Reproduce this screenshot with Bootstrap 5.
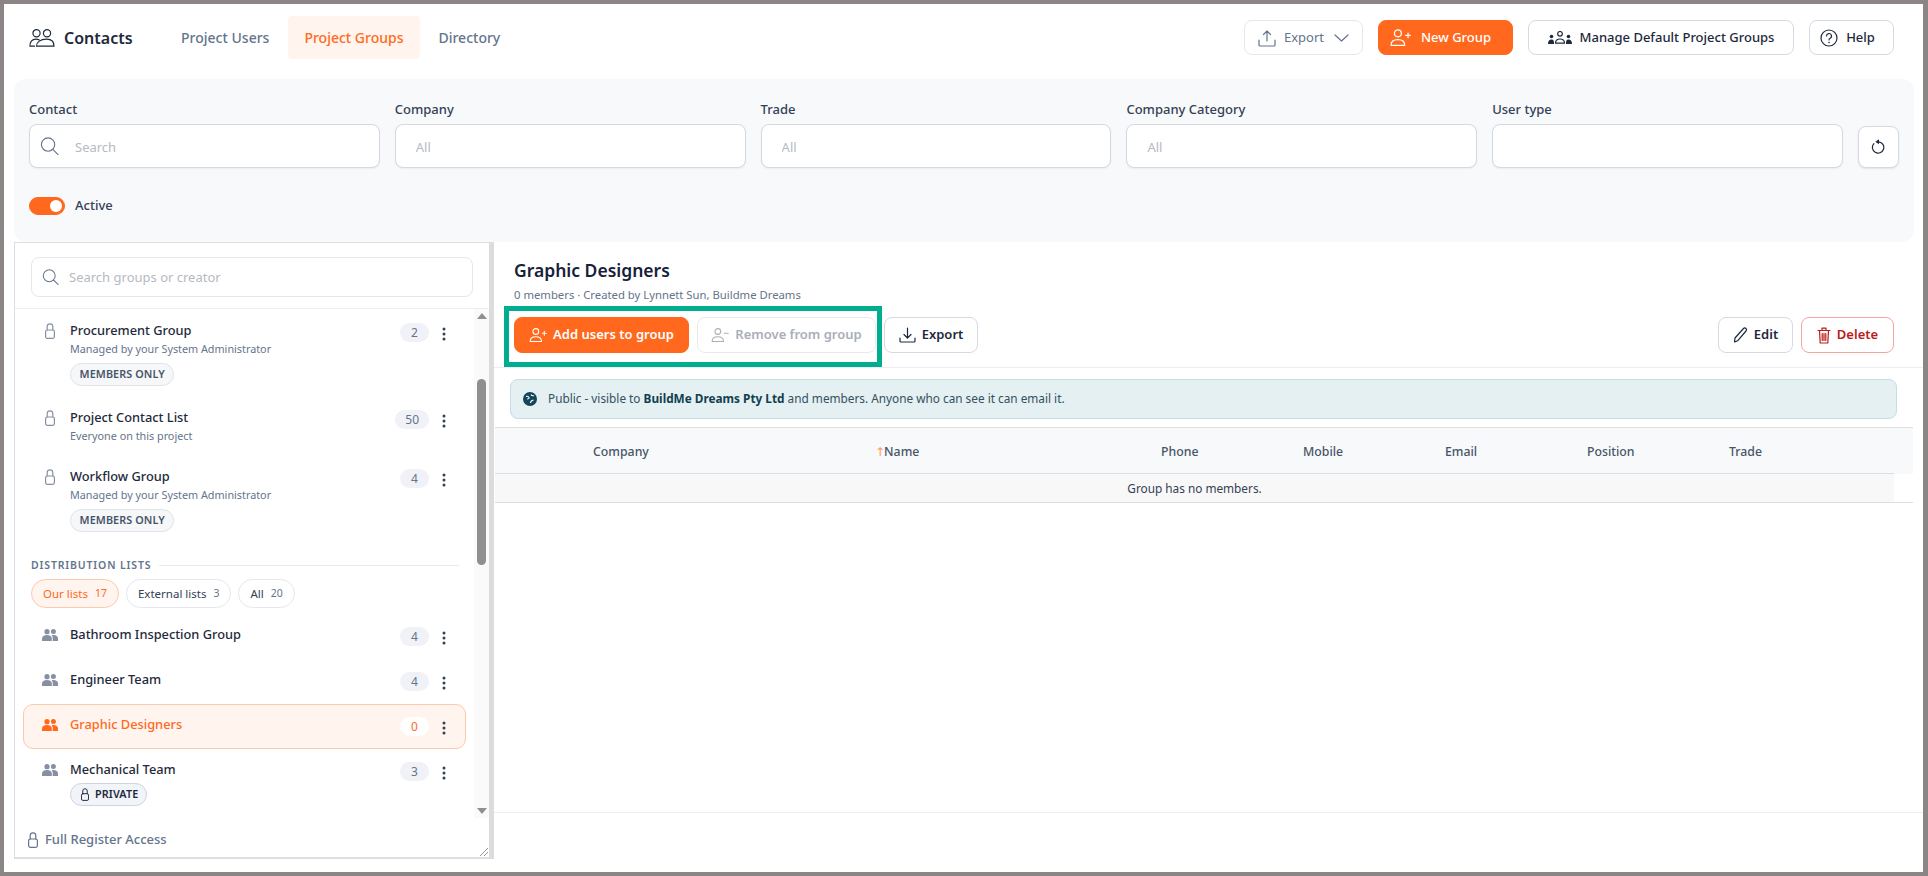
<!DOCTYPE html>
<html lang="en">
<head>
<meta charset="utf-8">
<title>Contacts</title>
<link href="https://cdn.jsdelivr.net/npm/bootstrap@5.3.0/dist/css/bootstrap.min.css" rel="stylesheet">
<style>
html,body{height:100%;overflow:hidden}
body{font-family:"Noto Sans","Open Sans",sans-serif;font-size:13px;color:#1e293b;background:#fff}
svg{display:block;flex:none}
.defsholder{position:absolute}
.frame{height:876px;border:solid #8c8585;border-width:4px 5px 4px 4px;position:relative;display:flex;flex-direction:column;background:#fff}
.ic{fill:none;stroke:currentColor;stroke-width:1.2;stroke-linecap:round;stroke-linejoin:round}
.topbar{height:75px;padding:12px 29px 0 25px;flex:none}
.brand{height:53px;font-size:16px;font-weight:600;color:#1e293b;gap:9px;margin-right:32px;margin-top:-5px}
.tabx{height:43px;display:flex;align-items:center;padding:0 16.500px;font-size:14px;font-weight:500;color:#64748b;border-radius:4px;text-decoration:none;margin-right:2px}
.tabx.on{background:#fff4ee;color:#ff6a1c}
.topacts{gap:15px;margin-top:4px}
.btnx{display:inline-flex;align-items:center;justify-content:center;gap:8px;height:35px;padding:0 12px;font-size:13px;font-weight:500;color:#1e293b;background:#fff;border:1px solid #d5d9e3;border-radius:8px;white-space:nowrap}
.btnx.prim{background:#ff681d;border-color:#ff681d;color:#fff}
.btnx.lite{border-color:#e4e7ec;color:#64748b;font-weight:400}
.btnx.dis{border-color:#e8eaf0;color:#a9aeb8;font-weight:600}
.btnx.bad{border-color:#f5a5a0;color:#b91c1c}
.btnx.act{height:36px;font-weight:600;gap:6px}
.w-exp{width:119px}.w-new{width:135px;gap:10px;padding:0 22px 0 12px}.w-mng{width:266px;gap:8px}.w-hlp{width:85px;padding:0 19px 0 11px}
.w-add{width:175px}.w-rem{width:179px}.w-xp2{width:94px}.w-edt{width:75px}.w-del{width:93px}
.chev{margin-left:2px}
.filters{margin:0 9px 0 10px;height:163px;background:#f8f9fb;border-radius:12px;padding:22px 15px 0;flex:none}
.frow{gap:15px}
.fld{flex:1 1 0;min-width:0}
.fld label{display:block;font-size:13px;font-weight:500;color:#334155;line-height:16px;margin-bottom:7px}
.fld .form-control{height:44px;font-size:13px;border:1px solid #d5d9e3;border-radius:8px;padding:8px 12px 6px 20px;box-shadow:0 1px 2px rgba(30,41,59,.06)}
.form-control::placeholder{color:#b6bac2}
.fld .form-control.withicon{padding-left:45px}
.inico{position:absolute;top:50%;transform:translateY(-50%);color:#64748b}
.ico-c{left:11px}
.ico-l{left:27px;top:34px}
.resetb{width:41px;height:42px;padding:0;margin-top:25px;box-shadow:0 1px 2px rgba(30,41,59,.1)}
.swt{margin:28px 0 0;padding:0;min-height:18px;gap:10px;font-size:13px;font-weight:500;color:#334155}
.swt .form-check-input{width:36px;height:18px;margin:0;background-color:#ff681d;border-color:#ff681d;box-shadow:none}
.mainrow{flex:1 1 0;min-height:0;display:flex;margin-left:10px}
.leftp{width:475px;flex:none;height:617px;border:solid #dcdee2;border-width:1px 0 2px 1px;display:flex;flex-direction:column;position:relative;background:#fff}
.splitbar{width:5px;background:#dcdcdc;height:617px;flex:none}
.lsearch{height:66px;padding:14px 16px 0 16px;border-bottom:1px solid #eceef2;flex:none}
.lsearch .form-control{height:40px;font-size:13px;border:1px solid #e4e7ec;border-radius:8px;padding-left:37px}
.lbody{height:509px;display:flex;flex:none;overflow:hidden}
.lscroll{flex:1 1 0;min-width:0;padding:1px 8px 0;overflow:hidden}
.track{width:15px;background:#fafafa;flex:none;display:flex;flex-direction:column;align-items:center;padding-top:4px;position:relative}
.thumb{width:9px;height:186px;background:#8f8f8f;border-radius:5px;margin-top:60px}
.tri{width:0;height:0;border-left:5px solid transparent;border-right:5px solid transparent}
.tri.u{border-bottom:6px solid #8f8f8f}
.tri.d{border-top:6px solid #8f8f8f;margin-top:auto;margin-bottom:4px}
.item{display:flex;align-items:flex-start;padding:10px 19px 11px 18px;border:1px solid transparent;border-radius:10px;min-height:45px}
.item.tall{padding-bottom:10px}
.item.sel{background:#fff4ee;border-color:#fdc9ac}
.item .leadi{width:16px;margin-right:12px;color:#8790a3;display:flex;justify-content:center;margin-top:2px}
.item .leadi.grp{margin-top:4px}
.item.sel .leadi,.item.sel .ttl{color:#ff681d}
.ibody{flex:1 1 0;min-width:0}
.ttl{font-size:12.800px;font-weight:500;line-height:18px;color:#1e293b}
.subl{font-size:10.800px;line-height:16px;color:#64748b;margin-top:2px}
.tagx{display:flex;width:fit-content;align-items:center;gap:5px;height:23px;padding:0 8.500px;border:1px solid #dfe3ea;border-radius:12px;background:#f6f7f9;font-size:10.800px;font-weight:600;color:#475569;margin-top:6px;letter-spacing:.1px}
.tagx.dark{background:#f1f4f9;border-color:#cdd4e0;color:#1e293b;margin-top:5px;padding:0 8px 0 10px;gap:6px}
.cnt{min-width:29px;height:19px;padding:0 10px;border-radius:10px;background:#f0f2f7;color:#64748b;font-size:12px;line-height:19px;text-align:center;margin-top:2px}
.item.sel .cnt{background:#fff;color:#ff681d}
.dots{margin:6px 0 0 13px;color:#334155}
.sechead{padding:14px 7px 0 8px;gap:8px;font-size:10.500px;font-weight:600;letter-spacing:.85px;line-height:16px;color:#64748b}
.sechead i{flex:1;height:1px;background:#e8ebef}
.pillrow{gap:7px;margin:6px 0 6px 8px}
.chip{height:29px;display:inline-flex;align-items:center;gap:7px;padding:0 11px;border:1px solid #e4e7ec;border-radius:15px;font-size:11.500px;color:#334155;background:#fff}
.chip em{font-style:normal;font-size:10.500px;color:#64748b}
.chip.on{background:#fff4ee;border-color:#fdc9ac;color:#ff681d}
.chip.on em{color:#ff681d}
.lfoot{padding:12px 0 0 13px;gap:7px;font-size:13px;font-weight:500;color:#64748b}
.grip{position:absolute;right:1px;bottom:1px;color:#777}
.rightp{flex:1 1 0;min-width:0;display:flex;flex-direction:column}
.rhead{height:126px;padding:16px 29px 0 20px;border-bottom:1px solid #eceef2;position:relative;flex:none}
.rhead h1{font-size:17.500px;font-weight:600;line-height:24px;color:#16213a;margin:0}
.rsub{font-size:11.300px;line-height:16px;color:#64748b;margin:5px 0 14px}
.acts{gap:8px}
.notehi{position:absolute;left:10px;top:64px;width:378px;height:61px;border:5px solid #00ad8e;pointer-events:none}
.infox{margin:11px 26px 0 16px;height:40px;display:flex;align-items:center;gap:11px;padding:0 12px;background:#e4f0f2;border:1px solid #c5dde4;border-radius:8px;font-size:11.800px;color:#33515e}
.infox b{color:#12404f;font-weight:700}
.tblwrap{margin:8px 10px 0 1px;flex:none}
.gridt{width:1418px;table-layout:fixed;border-collapse:collapse;margin:0;font-size:12.300px}
.gridt .c0{width:90px}.gridt .c1{width:284px}.gridt .c2{width:142px}.gridt .c3{width:173px}.gridt .c4{width:19px}
.gridt th{height:46px;background:#f8f9fb;font-weight:500;color:#475569;padding:3px 8px 0;border-top:1px solid #dcdee2;border-bottom:1px solid #dcdee2;vertical-align:middle}
.gridt td{height:29px;padding:1px 0 0;background:#f8f8f8;text-align:center;font-size:11.800px;color:#334155;border-bottom:1px solid #dcdee2;vertical-align:middle}
.gridt td.blank{background:#fff}
.gridt th.blank{border-bottom:none}
.arrowup{color:#ff9a5c;font-family:"DejaVu Sans",sans-serif;font-size:12px;font-weight:400;letter-spacing:-2px;margin-left:-2px;margin-right:1px}
.rfoot{margin-top:auto;height:60px;border-top:1px solid #eceef2;flex:none}
</style>
</head>
<body>
<svg width="0" height="0" class="defsholder">
<defs>
<symbol id="i-search" viewBox="0 0 20 20"><circle cx="8.500" cy="8.500" r="7" class="ic"/><path d="M13.500 13.500 19 19" class="ic" stroke-width="1.800"/></symbol>
<symbol id="i-lock" viewBox="0 0 10 16"><path d="M2.200 7V3.600a2.800 2.800 0 0 1 5.600 0V7" class="ic"/><rect x=".6" y="7" width="8.800" height="8.400" rx="1.800" class="ic"/></symbol>
<symbol id="i-group" viewBox="0 0 16 12"><circle cx="5" cy="2.700" r="2.600" fill="currentColor"/><circle cx="11.400" cy="2.500" r="2.500" fill="currentColor"/><path d="M0 12V9.400C0 7.300 2 6 5 6s4.800 1.300 4.800 3.400V12Z" fill="currentColor"/><path d="M10.700 12V8.800c0-1-.4-2-1.200-2.600.6-.2 1.200-.3 1.900-.3 2.700 0 4.600 1.300 4.600 3.400V12Z" fill="currentColor"/></symbol>
<symbol id="i-dots" viewBox="0 0 4 14"><circle cx="2" cy="2" r="1.500" fill="currentColor"/><circle cx="2" cy="7" r="1.500" fill="currentColor"/><circle cx="2" cy="12" r="1.500" fill="currentColor"/></symbol>
<symbol id="i-uplus" viewBox="0 0 20 16"><circle cx="7.500" cy="4" r="3.300" class="ic"/><path d="M1 15.400c0-3.600 2.800-5.400 6.500-5.400s6.500 1.800 6.500 5.400Z" class="ic"/><path d="M15 6h4.400M17.200 3.800v4.400" class="ic"/></symbol>
<symbol id="i-uminus" viewBox="0 0 20 16"><circle cx="7.500" cy="4" r="3.300" class="ic"/><path d="M1 15.400c0-3.600 2.800-5.400 6.500-5.400s6.500 1.800 6.500 5.400Z" class="ic"/><path d="M15 6h4.400" class="ic"/></symbol>
</defs>
</svg>
<div class="frame">
  <header class="topbar d-flex align-items-start">
    <div class="brand d-flex align-items-center">
      <svg width="26" height="18" viewBox="0 0 26 18"><circle cx="7.500" cy="4.300" r="3.600" class="ic" stroke-width="1.500"/><circle cx="18" cy="4.300" r="3.600" class="ic" stroke-width="1.500"/><path d="M1 17.200c-.4-4.200 2-7 6-7 1.300 0 2.400.3 3.300.8M1 17.200h4.500" class="ic" stroke-width="1.500"/><path d="M7.500 17.200c0-4.200 4-7 10-7s7.500 2.800 7.500 7Z" class="ic" stroke-width="1.500"/></svg>
      <span>Contacts</span>
    </div>
    <nav class="d-flex">
      <a class="tabx" href="#">Project Users</a>
      <a class="tabx on" href="#">Project Groups</a>
      <a class="tabx" href="#">Directory</a>
    </nav>
    <div class="ms-auto d-flex topacts">
      <button class="btnx lite w-exp" type="button">
        <svg width="18" height="18" viewBox="0 0 18 18"><path d="M9 12V2M5.500 5.500 9 2l3.500 3.500M1 11v5a1 1 0 0 0 1 1h14a1 1 0 0 0 1-1v-5" class="ic"/></svg>
        <span>Export</span>
        <svg class="chev" width="15" height="8" viewBox="0 0 15 8"><path d="m1 1 6.500 6L14 1" class="ic"/></svg>
      </button>
      <button class="btnx prim w-new" type="button"><svg width="21" height="17"><use href="#i-uplus"/></svg>New Group</button>
      <button class="btnx w-mng" type="button">
        <svg width="24" height="13" viewBox="0 0 24 13"><circle cx="12" cy="2.800" r="2.300" class="ic" stroke-width="1.500"/><path d="M7.500 12.200c0-2.800 1.800-4.200 4.500-4.200s4.500 1.400 4.500 4.200Z" class="ic" stroke-width="1.500"/><circle cx="3.500" cy="5.500" r="1.800" fill="currentColor"/><circle cx="20.500" cy="5.500" r="1.800" fill="currentColor"/><path d="M0 13c0-3 1.200-4.500 3.500-4.500S6 10 6 13ZM24 13c0-3-1.200-4.500-3.500-4.500S18 10 18 13Z" fill="currentColor"/></svg>
        Manage Default Project Groups
      </button>
      <button class="btnx w-hlp" type="button">
        <svg width="18" height="18" viewBox="0 0 18 18"><circle cx="9" cy="9" r="8" class="ic"/><path d="M6.500 7a2.500 2.500 0 1 1 3.700 2.200c-.8.500-1.200.9-1.200 1.800" class="ic"/><circle cx="9" cy="13.500" r=".8" fill="currentColor"/></svg>
        Help
      </button>
    </div>
  </header>

  <section class="filters">
    <div class="d-flex frow">
      <div class="fld"><label>Contact</label>
        <div class="position-relative">
          <svg class="inico ico-c" width="19" height="19"><use href="#i-search"/></svg>
          <input class="form-control withicon" placeholder="Search">
        </div></div>
      <div class="fld"><label>Company</label><input class="form-control" placeholder="All"></div>
      <div class="fld"><label>Trade</label><input class="form-control" placeholder="All"></div>
      <div class="fld"><label>Company Category</label><input class="form-control" placeholder="All"></div>
      <div class="fld"><label>User type</label><input class="form-control"></div>
      <button class="btnx resetb" type="button"><svg width="14" height="16" viewBox="0 0 14 16"><path d="M7.800 2.800A5.700 5.700 0 1 1 2.900 4.600" class="ic"/><path d="M8 .2 4.300 2.700 8 5.200Z" fill="currentColor"/></svg></button>
    </div>
    <div class="form-check form-switch swt d-flex align-items-center">
      <input class="form-check-input" type="checkbox" checked id="activeSw">
      <label for="activeSw">Active</label>
    </div>
  </section>

  <div class="mainrow">
    <aside class="leftp">
      <div class="lsearch position-relative">
        <svg class="inico ico-l" width="17" height="17"><use href="#i-search"/></svg>
        <input class="form-control" placeholder="Search groups or creator">
      </div>
      <div class="lbody">
        <div class="lscroll">
          <div class="item tall"><span class="leadi"><svg width="10" height="16"><use href="#i-lock"/></svg></span>
            <div class="ibody"><div class="ttl">Procurement Group</div><div class="subl">Managed by your System Administrator</div><span class="tagx">MEMBERS ONLY</span></div>
            <span class="cnt">2</span><svg class="dots" width="4" height="14"><use href="#i-dots"/></svg></div>
          <div class="item"><span class="leadi"><svg width="10" height="16"><use href="#i-lock"/></svg></span>
            <div class="ibody"><div class="ttl">Project Contact List</div><div class="subl">Everyone on this project</div></div>
            <span class="cnt">50</span><svg class="dots" width="4" height="14"><use href="#i-dots"/></svg></div>
          <div class="item tall"><span class="leadi"><svg width="10" height="16"><use href="#i-lock"/></svg></span>
            <div class="ibody"><div class="ttl">Workflow Group</div><div class="subl">Managed by your System Administrator</div><span class="tagx">MEMBERS ONLY</span></div>
            <span class="cnt">4</span><svg class="dots" width="4" height="14"><use href="#i-dots"/></svg></div>
          <div class="sechead d-flex align-items-center"><span>DISTRIBUTION LISTS</span><i></i></div>
          <div class="pillrow d-flex">
            <span class="chip on">Our lists <em>17</em></span>
            <span class="chip">External lists <em>3</em></span>
            <span class="chip">All <em>20</em></span>
          </div>
          <div class="item"><span class="leadi grp"><svg width="16" height="12"><use href="#i-group"/></svg></span>
            <div class="ibody"><div class="ttl">Bathroom Inspection Group</div></div>
            <span class="cnt">4</span><svg class="dots" width="4" height="14"><use href="#i-dots"/></svg></div>
          <div class="item"><span class="leadi grp"><svg width="16" height="12"><use href="#i-group"/></svg></span>
            <div class="ibody"><div class="ttl">Engineer Team</div></div>
            <span class="cnt">4</span><svg class="dots" width="4" height="14"><use href="#i-dots"/></svg></div>
          <div class="item sel"><span class="leadi grp"><svg width="16" height="12"><use href="#i-group"/></svg></span>
            <div class="ibody"><div class="ttl">Graphic Designers</div></div>
            <span class="cnt">0</span><svg class="dots" width="4" height="14"><use href="#i-dots"/></svg></div>
          <div class="item"><span class="leadi grp"><svg width="16" height="12"><use href="#i-group"/></svg></span>
            <div class="ibody"><div class="ttl">Mechanical Team</div><span class="tagx dark"><svg width="8" height="13"><use href="#i-lock"/></svg>PRIVATE</span></div>
            <span class="cnt">3</span><svg class="dots" width="4" height="14"><use href="#i-dots"/></svg></div>
        </div>
        <div class="track"><span class="tri u"></span><div class="thumb"></div><span class="tri d"></span></div>
      </div>
      <div class="lfoot d-flex align-items-center"><svg width="10" height="16"><use href="#i-lock"/></svg>Full Register Access</div>
      <svg class="grip" width="8" height="8" viewBox="0 0 8 8"><path d="M0 8 8 0M4 8l4-4" stroke="currentColor" stroke-width=".8"/></svg>
    </aside>
    <div class="splitbar"></div>
    <main class="rightp">
      <div class="rhead">
        <h1>Graphic Designers</h1>
        <div class="rsub">0 members · Created by Lynnett Sun, Buildme Dreams</div>
        <div class="d-flex acts">
          <button class="btnx prim act w-add" type="button"><svg width="18" height="14"><use href="#i-uplus"/></svg>Add users to group</button>
          <button class="btnx dis act w-rem" type="button"><svg width="18" height="14"><use href="#i-uminus"/></svg>Remove from group</button>
          <button class="btnx act w-xp2" type="button"><svg width="17" height="16" viewBox="0 0 17 16"><path d="M8.500 1v10M5 7.500 8.500 11 12 7.500M1 11v3a1 1 0 0 0 1 1h13a1 1 0 0 0 1-1v-3" class="ic"/></svg>Export</button>
          <button class="btnx act ms-auto w-edt" type="button"><svg width="15" height="16" viewBox="0 0 15 16"><path d="M1.500 15 2 11 10.500 1.500c.8-.8 1.800-.8 2.500 0s.8 1.700 0 2.500L4.800 13.700Z" class="ic"/></svg>Edit</button>
          <button class="btnx bad act w-del" type="button"><svg width="14" height="17" viewBox="0 0 14 17"><path d="M1 3.500h12M5 3.500V1.200h4v2.300M2.500 3.500l.7 12.500h7.600l.7-12.500M5.200 6.500v7M7 6.500v7M8.800 6.500v7" class="ic"/></svg>Delete</button>
        </div>
        <div class="notehi"></div>
      </div>
      <div class="infox">
        <svg width="14" height="14" viewBox="0 0 14 14"><circle cx="7" cy="7" r="7" fill="#14465a"/><path d="M3 4.500c1.500-.5 2.500 0 3 1s-1 1.500-2 1.500M8 2.500c.5 1 1.500 1.500 3 1M7.500 11c0-1.500 1-2.500 3-3" stroke="#fff" stroke-width="1.100" fill="none"/></svg>
        <span>Public - visible to <b>BuildMe Dreams Pty Ltd</b> and members. Anyone who can see it can email it.</span>
      </div>
      <div class="tblwrap">
        <table class="gridt">
          <colgroup><col class="c0"><col class="c1"><col class="c1"><col class="c2"><col class="c2"><col class="c2"><col class="c2"><col class="c3"><col class="c4"></colgroup>
          <thead><tr><th></th><th>Company</th><th><span class="arrowup">↑</span>Name</th><th>Phone</th><th>Mobile</th><th>Email</th><th>Position</th><th>Trade</th><th class="blank"></th></tr></thead>
          <tbody><tr><td colspan="8">Group has no members.</td><td class="blank"></td></tr></tbody>
        </table>
      </div>
      <div class="rfoot"></div>
    </main>
  </div>
</div>
</body>
</html>
